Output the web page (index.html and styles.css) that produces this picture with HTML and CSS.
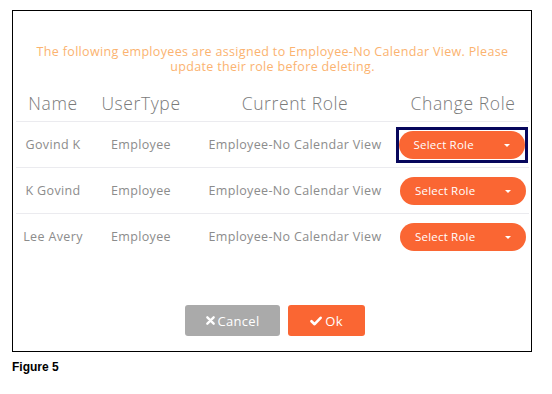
FILE: index.html
```html
<!DOCTYPE html>
<html lang="en">
<head>
  <meta charset="UTF-8" />
  <title>Delete Role</title>
  <link rel="stylesheet" href="styles.css">
</head>
<body>

<div class="dialog">
  <p class="notice">The following employees are assigned to Employee-No Calendar View. Please update their role before deleting.</p>

  <div class="table">
    <div class="row head">
      <div>Name</div>
      <div>UserType</div>
      <div>Current Role</div>
      <div>Change Role</div>
    </div>
    <div class="row">
      <div>Govind K</div>
      <div>Employee</div>
      <div>Employee-No Calendar View</div>
      <div><span class="focus-ring"><button class="role-select">Select Role <span class="caret"></span></button></span></div>
    </div>
    <div class="row">
      <div>K Govind</div>
      <div>Employee</div>
      <div>Employee-No Calendar View</div>
      <div><button class="role-select">Select Role <span class="caret"></span></button></div>
    </div>
    <div class="row last">
      <div>Lee Avery</div>
      <div>Employee</div>
      <div>Employee-No Calendar View</div>
      <div><button class="role-select">Select Role <span class="caret"></span></button></div>
    </div>
  </div>

  <div class="actions">
    <button class="btn btn-cancel">
      <svg width="9" height="9" viewBox="0 0 10 10"><path d="M1.5 1.5 L8.5 8.5 M8.5 1.5 L1.5 8.5" stroke="#fff" stroke-width="2.6" stroke-linecap="round"/></svg>
      Cancel
    </button>
    <button class="btn btn-ok">
      <svg width="12" height="10" viewBox="0 0 12 10"><path d="M1.5 5.2 L4.6 8.2 L10.6 1.8" fill="none" stroke="#fff" stroke-width="2.6" stroke-linecap="round" stroke-linejoin="round"/></svg>
      Ok
    </button>
  </div>
</div>

<div class="caption">Figure 5</div>

</body>
</html>
```

FILE: styles.css
```css
body {
  margin: 0;
  background: #fff;
  font-family: "Open Sans", sans-serif;
}

.dialog {
  box-sizing: border-box;
  width: 520px;
  height: 342px;
  margin: 10px 0 0 12px;
  border: 1px solid #000;
  padding: 0 2px 0 3px;
  display: flex;
  flex-direction: column;
}

.notice {
  margin: 33px 10px 0 10px;
  text-align: center;
  color: #fbb370;
  font-size: 12.5px;
  letter-spacing: 0.33px;
  line-height: 15px;
}

.table {
  margin-top: 18px;
}

.row {
  display: grid;
  grid-template-columns: 74px 102px 206px 130px;
  align-items: center;
  height: 45px;
  border-bottom: 1px solid #ebebef;
  color: #8c8c8c;
  font-size: 12.5px;
  letter-spacing: 0.35px;
  text-align: center;
}

.row.head {
  height: 29px;
  align-items: start;
  color: #7a7a7a;
  font-size: 17.5px;
  letter-spacing: 0.6px;
  line-height: 22px;
  font-weight: 300;
}

.row.last {
  border-bottom: none;
}

.focus-ring {
  display: inline-block;
  border: 3px solid #07075c;
  padding: 1px 0;
  line-height: 0;
  margin-left: -3px;
}

.role-select {
  position: relative;
  width: 126px;
  height: 28px;
  border: none;
  border-radius: 14px;
  background: #fa6633;
  color: #fff;
  font-family: "Open Sans", sans-serif;
  font-size: 11.5px;
  letter-spacing: 0.2px;
  text-align: left;
  padding: 0 0 0 15px;
}

.caret {
  position: absolute;
  right: 15px;
  top: 13px;
  border-left: 3px solid transparent;
  border-right: 3px solid transparent;
  border-top: 3px solid #fff;
}

.actions {
  margin-top: auto;
  margin-bottom: 15px;
  display: flex;
  justify-content: center;
  gap: 8px;
  padding-left: 5px;
}

.btn {
  height: 31px;
  border: none;
  border-radius: 3px;
  color: #fff;
  font-family: "Open Sans", sans-serif;
  font-size: 13px;
  letter-spacing: 0.3px;
  display: flex;
  align-items: center;
  justify-content: center;
  gap: 3px;
}

.btn-cancel {
  width: 95px;
  background: #aaaaaa;
}

.btn-ok {
  width: 77px;
  background: #fa6633;
}

.caption {
  margin: 8px 0 0 12px;
  font-family: "Liberation Sans", Arial, sans-serif;
  font-weight: bold;
  font-size: 12px;
}
```
